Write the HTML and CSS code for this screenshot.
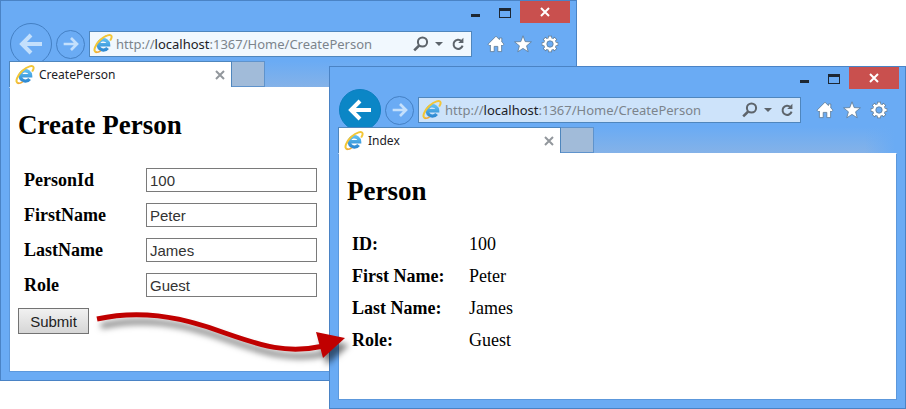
FILE: index.html
```html
<!DOCTYPE html>
<html lang="en">
<head>
<meta charset="utf-8">
<title>Create Person</title>
<link rel="stylesheet" href="styles.css">
</head>
<body>
<svg class="defs" aria-hidden="true">
  <defs>
    <linearGradient id="blue" x1="0" y1="0" x2="0" y2="1">
      <stop offset="0" stop-color="#5fbdf0"/><stop offset="1" stop-color="#2f8ad2"/>
    </linearGradient>
  </defs>
  <symbol id="ie" viewBox="0 0 20 20">
    <path d="M5.2 10.8H15.6A5.2 5.2 0 1 0 14.6 14" fill="none" stroke="url(#blue)" stroke-width="3.4"/>
    <path d="M3.2 18.2C-.6 17.4 2.4 10.4 7.4 5.8C12.2 1.4 18.2-.6 18.6 2.6C18.7 3.6 18.2 4.8 17.6 5.8" fill="none" stroke="#f2c637" stroke-width="2" stroke-linecap="round"/>
    <path d="M3.2 18.2C4.6 18.5 6 18 7.2 17.2" fill="none" stroke="#f2a93b" stroke-width="1.5" stroke-linecap="round"/>
  </symbol>
  <symbol id="arrow" viewBox="0 0 24 24">
    <path d="M2.5 12H23M12 3L3 12L12 21" fill="none" stroke="currentColor" stroke-width="4"/>
  </symbol>
  <symbol id="search" viewBox="0 0 16 16">
    <circle cx="9.5" cy="6" r="4.6" fill="none" stroke="currentColor" stroke-width="2"/>
    <path d="M6.2 9.5L1.2 14.4" stroke="currentColor" stroke-width="2.6"/>
  </symbol>
  <symbol id="refresh" viewBox="0 0 14 14">
    <path d="M10.4 4A4.6 4.6 0 1 0 11.6 8.6" fill="none" stroke="currentColor" stroke-width="2"/>
    <path d="M12.4 .8V6H7.2L9 4.2L10.6 2.6Z" fill="currentColor"/>
  </symbol>
  <symbol id="home" viewBox="0 0 18 18">
    <path d="M9 1.2L1 9.2L2.6 10.8L3.4 10V16.6H7.2V11.4H10.8V16.6H14.6V10L15.4 10.8L17 9.2L14.8 7V3H12.4V4.6Z" fill="#fff" stroke="#5c7893" stroke-width=".8"/>
  </symbol>
  <symbol id="star" viewBox="0 0 18 18">
    <path d="M9 .8L11.2 6.6L17.4 6.9L12.6 10.8L14.2 16.8L9 13.4L3.8 16.8L5.4 10.8L.6 6.9L6.8 6.6Z" fill="#fff" stroke="#5c7893" stroke-width=".8"/>
  </symbol>
  <symbol id="gear" viewBox="0 0 18 18">
    <path d="M9 .8V17.2M.8 9H17.2M3.2 3.2L14.8 14.8M14.8 3.2L3.2 14.8" stroke="#5c7893" stroke-width="4"/>
    <circle cx="9" cy="9" r="6.6" fill="#5c7893"/>
    <path d="M9 1.4V16.6M1.4 9H16.6M3.6 3.6L14.4 14.4M14.4 3.6L3.6 14.4" stroke="#fff" stroke-width="2.6"/>
    <circle cx="9" cy="9" r="6" fill="#fff"/>
    <circle cx="9" cy="9" r="3.2" fill="#6aabf4" stroke="#5c7893" stroke-width=".8"/>
  </symbol>
</svg>

<main class="desktop">
  <section class="window window-form" aria-label="CreatePerson">
    <header class="titlebar">
      <button class="caption" aria-label="Minimize"><span class="min"></span></button>
      <button class="caption" aria-label="Maximize"><span class="max"></span></button>
      <button class="caption close" aria-label="Close"><svg viewBox="0 0 10 10"><path d="M1 1L9 9M9 1L1 9"/></svg></button>
    </header>
    <div class="nav">
      <button class="round back" aria-label="Back"><svg><use href="#arrow"/></svg></button>
      <button class="round forward" aria-label="Forward"><svg><use href="#arrow"/></svg></button>
      <div class="address">
        <svg class="logo"><use href="#ie"/></svg>
        <div class="url" role="textbox" aria-label="Address" contenteditable="true" spellcheck="false">http://<b>localhost</b>:1367/Home/CreatePerson</div>
        <button class="tool" aria-label="Search"><svg class="search"><use href="#search"/></svg></button>
        <button class="tool" aria-label="Show addresses"><span class="caret"></span></button>
        <button class="tool" aria-label="Refresh"><svg class="refresh"><use href="#refresh"/></svg></button>
      </div>
      <div class="commands">
        <button class="tool" aria-label="Home"><svg><use href="#home"/></svg></button>
        <button class="tool" aria-label="Favorites"><svg><use href="#star"/></svg></button>
        <button class="tool" aria-label="Tools"><svg><use href="#gear"/></svg></button>
      </div>
    </div>
    <div class="tabs">
      <div class="tab">
        <svg class="logo"><use href="#ie"/></svg>
        <span class="tab-name">CreatePerson</span>
        <button class="tool tab-close" aria-label="Close tab"><svg viewBox="0 0 10 10"><path d="M1 1L9 9M9 1L1 9"/></svg></button>
      </div>
      <button class="new-tab" aria-label="New tab"></button>
    </div>
    <div class="page">
      <h1>Create Person</h1>
      <form>
        <div class="fields">
          <label for="person-id">PersonId</label><input id="person-id" type="text" value="100">
          <label for="first-name">FirstName</label><input id="first-name" type="text" value="Peter">
          <label for="last-name">LastName</label><input id="last-name" type="text" value="James">
          <label for="role">Role</label><input id="role" type="text" value="Guest">
        </div>
        <button class="submit" type="button">Submit</button>
      </form>
    </div>
  </section>

  <section class="window window-result active" aria-label="Index">
    <header class="titlebar">
      <button class="caption" aria-label="Minimize"><span class="min"></span></button>
      <button class="caption" aria-label="Maximize"><span class="max"></span></button>
      <button class="caption close" aria-label="Close"><svg viewBox="0 0 10 10"><path d="M1 1L9 9M9 1L1 9"/></svg></button>
    </header>
    <div class="nav">
      <button class="round back" aria-label="Back"><svg><use href="#arrow"/></svg></button>
      <button class="round forward" aria-label="Forward"><svg><use href="#arrow"/></svg></button>
      <div class="address">
        <svg class="logo"><use href="#ie"/></svg>
        <div class="url" role="textbox" aria-label="Address" contenteditable="true" spellcheck="false">http://<b>localhost</b>:1367/Home/CreatePerson</div>
        <button class="tool" aria-label="Search"><svg class="search"><use href="#search"/></svg></button>
        <button class="tool" aria-label="Show addresses"><span class="caret"></span></button>
        <button class="tool" aria-label="Refresh"><svg class="refresh"><use href="#refresh"/></svg></button>
      </div>
      <div class="commands">
        <button class="tool" aria-label="Home"><svg><use href="#home"/></svg></button>
        <button class="tool" aria-label="Favorites"><svg><use href="#star"/></svg></button>
        <button class="tool" aria-label="Tools"><svg><use href="#gear"/></svg></button>
      </div>
    </div>
    <div class="tabs">
      <div class="tab">
        <svg class="logo"><use href="#ie"/></svg>
        <span class="tab-name">Index</span>
        <button class="tool tab-close" aria-label="Close tab"><svg viewBox="0 0 10 10"><path d="M1 1L9 9M9 1L1 9"/></svg></button>
      </div>
      <button class="new-tab" aria-label="New tab"></button>
    </div>
    <div class="page">
      <h1>Person</h1>
      <table>
        <tr><th scope="row">ID:</th><td>100</td></tr>
        <tr><th scope="row">First Name:</th><td>Peter</td></tr>
        <tr><th scope="row">Last Name:</th><td>James</td></tr>
        <tr><th scope="row">Role:</th><td>Guest</td></tr>
      </table>
    </div>
  </section>

  <svg class="flow" viewBox="0 0 260 60" aria-hidden="true">
    <path d="M5 14C45 5 85 10 133 28C170 41 195 49 232 41" fill="none" stroke="#c00000" stroke-width="5"/>
    <path d="M224 27L253 33L231 53Z" fill="#c00000"/>
  </svg>
</main>
</body>
</html>
```

FILE: styles.css
```css
* { box-sizing: border-box; }

body {
  margin: 0;
  background: #fff;
  color: #000;
  font-family: "Liberation Serif", serif;
}

button {
  margin: 0;
  padding: 0;
  border: 0;
  background: none;
  color: inherit;
}

svg { display: block; }

.defs {
  position: absolute;
  width: 0;
  height: 0;
}

.desktop {
  position: relative;
  min-height: 100vh;
  overflow: hidden;
}

.window {
  position: absolute;
  width: calc(100% - 329px);
  border: 1px solid #4a83c5;
  background: #6aabf4;
  font: 13px/18px "Noto Sans", "Open Sans", sans-serif;
}

.window-form { top: 0; left: 0; }
.window-result { top: 66px; left: 329px; }

/* Title bar */
.titlebar {
  display: flex;
  justify-content: flex-end;
  height: 22px;
  padding-right: 6px;
}

.caption {
  display: flex;
  justify-content: center;
  width: 30px;
  height: 22px;
}

.min {
  width: 9px;
  height: 3px;
  margin-top: 13px;
  background: #1d2733;
}

.max {
  width: 12px;
  height: 10px;
  margin-top: 7px;
  border: 1px solid #1d2733;
  border-top-width: 3px;
}

.close {
  align-items: center;
  width: 50px;
  background: #c9504e;
}

.close svg { width: 10px; height: 10px; }
.close path { stroke: #fff; stroke-width: 2; }

/* Navigation row */
.nav {
  display: flex;
  align-items: center;
  height: 42px;
  padding: 0 17px 0 9px;
}

.round {
  display: flex;
  flex: none;
  align-items: center;
  justify-content: center;
  border: 1px solid #4480c4;
  border-radius: 50%;
  color: #c4e0fc;
}

.back { width: 42px; height: 42px; }
.back svg { width: 24px; height: 24px; }
.forward { width: 29px; height: 29px; margin: 0 4px; }
.forward svg { width: 16px; height: 16px; transform: rotate(180deg); }

.active .back {
  border-color: #0b7fc0;
  background: #0b86c6;
  color: #fff;
}

.address {
  display: flex;
  flex: 1;
  align-items: center;
  min-width: 0;
  height: 26px;
  padding: 0 6px 0 3px;
  border: 1px solid #4f86bd;
  background: #f1f8fe;
  color: #5d646b;
}

.active .address { background: #cde3fa; }

.logo {
  flex: none;
  width: 20px;
  height: 20px;
}

.url {
  flex: 1;
  min-width: 0;
  margin-left: 3px;
  overflow: hidden;
  color: #7c848c;
  white-space: nowrap;
}

.url b {
  color: #1c2126;
  font-weight: 400;
}

.tool { flex: none; }
.search { width: 16px; height: 16px; }

.caret {
  display: block;
  margin: 0 8px 0 6px;
  border: 4px solid transparent;
  border-top-color: currentColor;
  border-bottom: 0;
}

.refresh { width: 14px; height: 14px; }

.commands {
  display: flex;
  gap: 9px;
  margin-left: 15px;
}

.commands svg { width: 18px; height: 18px; }

/* Tab strip */
.tabs {
  display: flex;
  position: relative;
  height: 26px;
  margin-top: -4px;
  padding: 0 8px;
  background:
    linear-gradient(90deg, #6aabf4 10px, #6aabf400 40px calc(100% - 40px), #6aabf4 calc(100% - 10px)),
    linear-gradient(#6aabf4, #84b2e8);
}

.tab {
  display: flex;
  align-items: center;
  width: 223px;
  padding: 0 6px 0 5px;
  border: 1px solid #4f86bd;
  border-bottom: 0;
  background: #fff;
  color: #1c2126;
  font-size: 12px;
}

.tab-name { flex: 1; margin-left: 4px; }
.tab-close svg { width: 10px; height: 10px; }
.tab-close path { stroke: #92979c; stroke-width: 2; }

.new-tab {
  width: 33px;
  border: 1px solid #5f93cc;
  border-left: 0;
  background: #a1bbd9;
}

/* Page area */
.page {
  margin: 0 8px 8px;
  border: 1px solid #5c98dc;
  border-top-color: #fff;
  background: #fff;
  font: 18px/20px "Liberation Serif", serif;
}

.window-form .page { padding: 21px 8px 37px; }
.window-result .page { padding: 21px 8px 43px; }

h1 {
  margin: 0;
  font-size: 27px;
  line-height: 32px;
}

.fields {
  display: grid;
  grid-template-columns: 122px 171px;
  row-gap: 11px;
  align-items: center;
  margin: 27px 0 11px 6px;
}

.fields label { font-weight: 700; }

.fields input {
  height: 24px;
  padding: 0 3px;
  border: 1px solid #7a7a7a;
  background: #fff;
  color: #333;
  font: 15px "Liberation Sans", sans-serif;
}

.submit {
  display: block;
  width: 71px;
  height: 26px;
  border: 1px solid #737373;
  background: linear-gradient(#f1f1f1, #d6d6d6);
  color: #222;
  font: 15px "Liberation Sans", sans-serif;
}

table {
  margin: 21px 0 0 5px;
  border-collapse: collapse;
}

th, td {
  height: 32px;
  padding: 0;
  text-align: left;
}

th { width: 117px; }

/* Arrow from the submit button to the result */
.flow {
  position: absolute;
  top: 305px;
  left: 92px;
  width: 260px;
  height: 60px;
  overflow: visible;
  filter: drop-shadow(4px 7px 3px #0008);
  pointer-events: none;
}
```
